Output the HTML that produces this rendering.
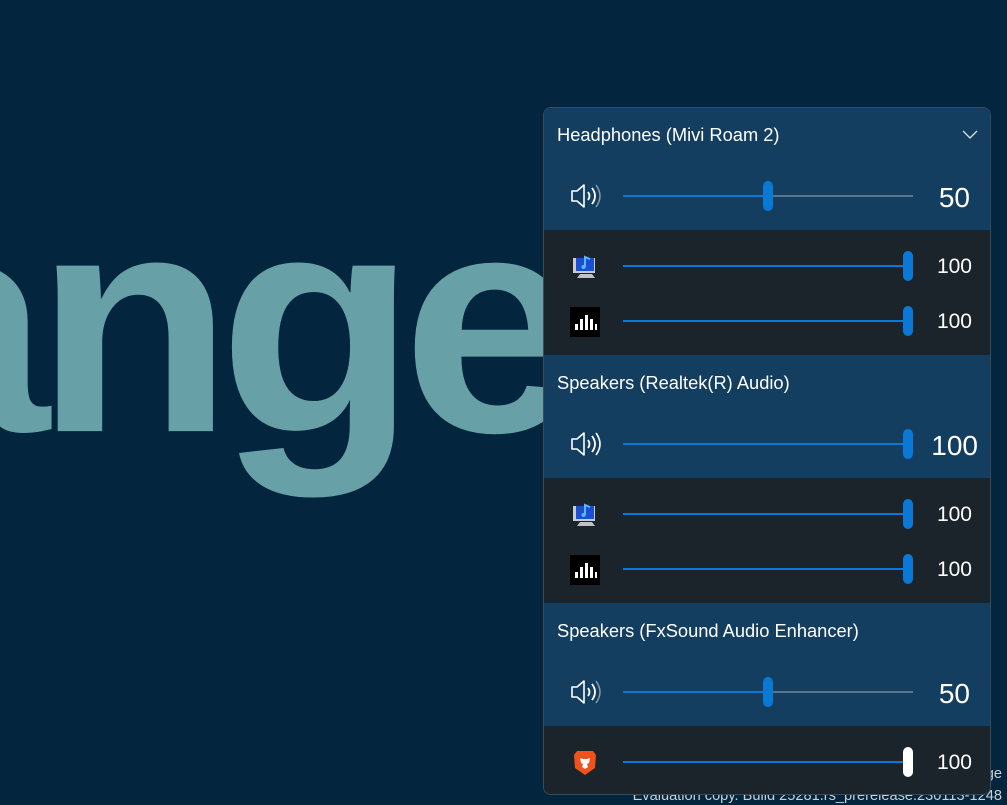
<!DOCTYPE html><html><head><style>
*{margin:0;padding:0;box-sizing:border-box}
html,body{width:1007px;height:805px;overflow:hidden}
body{background:#03263e;font-family:"Liberation Sans",sans-serif;position:relative}
.bg{position:absolute;left:0;top:0;width:1007px;height:805px;overflow:hidden}
.big{position:absolute;left:-151px;top:127px;font-size:360px;line-height:360px;font-weight:bold;color:#68a0a8;letter-spacing:-16px;white-space:nowrap;transform:scale(0.9,0.87);transform-origin:203px 305px}
.wm{position:absolute;right:5px;color:#c9d0d4;font-size:14.6px;white-space:nowrap}
.panel{position:absolute;left:543px;top:107px;width:448px;height:688px;border-radius:8px;overflow:hidden;border:1px solid #3a4a56}
.sec{position:absolute;left:0;width:448px}
.blue{background:#133e5f}.dark{background:#1b242b}
.title{position:absolute;left:13px;color:#fff;font-size:18.3px}
.row{position:absolute;left:0;width:448px;height:40px}
.track{position:absolute;left:79px;width:290px;height:2px;top:19px;background:#5d7588}
.fill{position:absolute;left:0;top:0;height:2px;background:#0a78d4}
.thumb{position:absolute;top:-14px;width:10px;height:30px;border-radius:5px;background:#0a78d4;margin-left:-5px}
.num{position:absolute;right:22px;color:#fff;top:6px}
.icon{position:absolute;left:26px;top:6px}
</style></head><body>
<div class="bg"><div class="big">ange</div>
<div class="wm" style="top:766px">ge</div>
<div class="wm" style="top:788px">Evaluation copy. Build 25281.rs_prerelease.230113-1248</div></div>
<div class="panel">
<div class="sec blue" style="top:0;height:122px"></div>
<div class="sec dark" style="top:122px;height:125px"></div>
<div class="sec blue" style="top:247px;height:123px"></div>
<div class="sec dark" style="top:370px;height:125px"></div>
<div class="sec blue" style="top:495px;height:123px"></div>
<div class="sec dark" style="top:618px;height:70px"></div>

<div class="title" style="top:16px">Headphones (Mivi Roam 2)</div>
<svg style="position:absolute;left:418px;top:22px" width="16" height="10"><path d="M1 1l7 7 7-7" stroke="#dfe6ea" stroke-width="1.3" fill="none"/></svg>
<div class="title" style="top:264px">Speakers (Realtek(R) Audio)</div>
<div class="title" style="top:512px">Speakers (FxSound Audio Enhancer)</div>

<div class="row" style="top:68px">
<svg class="icon" width="34" height="28" viewBox="0 0 34 28"><path d="M2 9h5l7-6v22l-7-6H2z" stroke="#fff" stroke-width="1.6" fill="none" stroke-linejoin="round"/><path d="M18 10q3 4 0 8" stroke="#fff" stroke-width="1.8" fill="none"/><path d="M22 6q6 8 0 16" stroke="#fff" stroke-width="1.8" fill="none"/><path d="M26 3q8 11 0 22" stroke="#8fa1ad" stroke-width="1.4" fill="none"/></svg>
<div class="track"><div class="fill" style="width:145px"></div><div class="thumb" style="left:145px"></div></div>
<div class="num" style="font-size:28px;right:22px">50</div></div>

<div class="row" style="top:138px">
<svg class="icon" width="32" height="28" viewBox="0 0 32 28"><rect x="3" y="6" width="22" height="15" fill="#c8ccd0"/><rect x="6" y="6" width="18" height="13" fill="#1a4fd0"/><path d="M10 22h12l3 4H7z" fill="#bfc3c7"/><path d="M15 15V5l5 2" stroke="#5ab8ff" stroke-width="2" fill="none"/><circle cx="13.5" cy="15" r="2" fill="#5ab8ff"/></svg>
<div class="track"><div class="fill" style="width:285px"></div><div class="thumb" style="left:285px"></div></div>
<div class="num" style="font-size:21px;right:20px;top:9px">100</div></div>

<div class="row" style="top:193px">
<svg class="icon" width="30" height="30" viewBox="0 0 30 30"><rect width="30" height="30" fill="#000"/><rect x="5" y="17" width="3" height="6" fill="#fff"/><rect x="10" y="12" width="3" height="11" fill="#fff"/><rect x="15" y="8" width="3" height="15" fill="#fff"/><rect x="20" y="12" width="3" height="11" fill="#fff"/><rect x="25" y="17" width="2" height="6" fill="#fff"/></svg>
<div class="track"><div class="fill" style="width:285px"></div><div class="thumb" style="left:285px"></div></div>
<div class="num" style="font-size:21px;right:20px;top:9px">100</div></div>

<div class="row" style="top:316px">
<svg class="icon" width="34" height="28" viewBox="0 0 34 28"><path d="M2 9h5l7-6v22l-7-6H2z" stroke="#fff" stroke-width="1.6" fill="none" stroke-linejoin="round"/><path d="M18 10q3 4 0 8" stroke="#fff" stroke-width="1.8" fill="none"/><path d="M22 6q6 8 0 16" stroke="#fff" stroke-width="1.8" fill="none"/><path d="M26 3q8 11 0 22" stroke="#fff" stroke-width="1.6" fill="none"/></svg>
<div class="track"><div class="fill" style="width:285px"></div><div class="thumb" style="left:285px"></div></div>
<div class="num" style="font-size:28px;right:14px">100</div></div>

<div class="row" style="top:386px">
<svg class="icon" width="32" height="28" viewBox="0 0 32 28"><rect x="3" y="6" width="22" height="15" fill="#c8ccd0"/><rect x="6" y="6" width="18" height="13" fill="#1a4fd0"/><path d="M10 22h12l3 4H7z" fill="#bfc3c7"/><path d="M15 15V5l5 2" stroke="#5ab8ff" stroke-width="2" fill="none"/><circle cx="13.5" cy="15" r="2" fill="#5ab8ff"/></svg>
<div class="track"><div class="fill" style="width:285px"></div><div class="thumb" style="left:285px"></div></div>
<div class="num" style="font-size:21px;right:20px;top:9px">100</div></div>

<div class="row" style="top:441px">
<svg class="icon" width="30" height="30" viewBox="0 0 30 30"><rect width="30" height="30" fill="#000"/><rect x="5" y="17" width="3" height="6" fill="#fff"/><rect x="10" y="12" width="3" height="11" fill="#fff"/><rect x="15" y="8" width="3" height="15" fill="#fff"/><rect x="20" y="12" width="3" height="11" fill="#fff"/><rect x="25" y="17" width="2" height="6" fill="#fff"/></svg>
<div class="track"><div class="fill" style="width:285px"></div><div class="thumb" style="left:285px"></div></div>
<div class="num" style="font-size:21px;right:20px;top:9px">100</div></div>

<div class="row" style="top:564px">
<svg class="icon" width="34" height="28" viewBox="0 0 34 28"><path d="M2 9h5l7-6v22l-7-6H2z" stroke="#fff" stroke-width="1.6" fill="none" stroke-linejoin="round"/><path d="M18 10q3 4 0 8" stroke="#fff" stroke-width="1.8" fill="none"/><path d="M22 6q6 8 0 16" stroke="#fff" stroke-width="1.8" fill="none"/><path d="M26 3q8 11 0 22" stroke="#8fa1ad" stroke-width="1.4" fill="none"/></svg>
<div class="track"><div class="fill" style="width:145px"></div><div class="thumb" style="left:145px"></div></div>
<div class="num" style="font-size:28px;right:22px">50</div></div>

<div class="row" style="top:634px">
<svg class="icon" width="30" height="30" viewBox="0 0 30 30"><path d="M7 3h16l3 4-1 13-10 7-10-7-1-13z" fill="#f1511b"/><path d="M10 10l3 1h4l3-1-1 5-2 1 1 3-3 2-3-2 1-3-2-1z" fill="#fff"/></svg>
<div class="track"><div class="fill" style="width:285px"></div><div class="thumb" style="left:285px;background:#fff"></div></div>
<div class="num" style="font-size:21px;right:20px;top:9px">100</div></div>
</div>
</body></html>
